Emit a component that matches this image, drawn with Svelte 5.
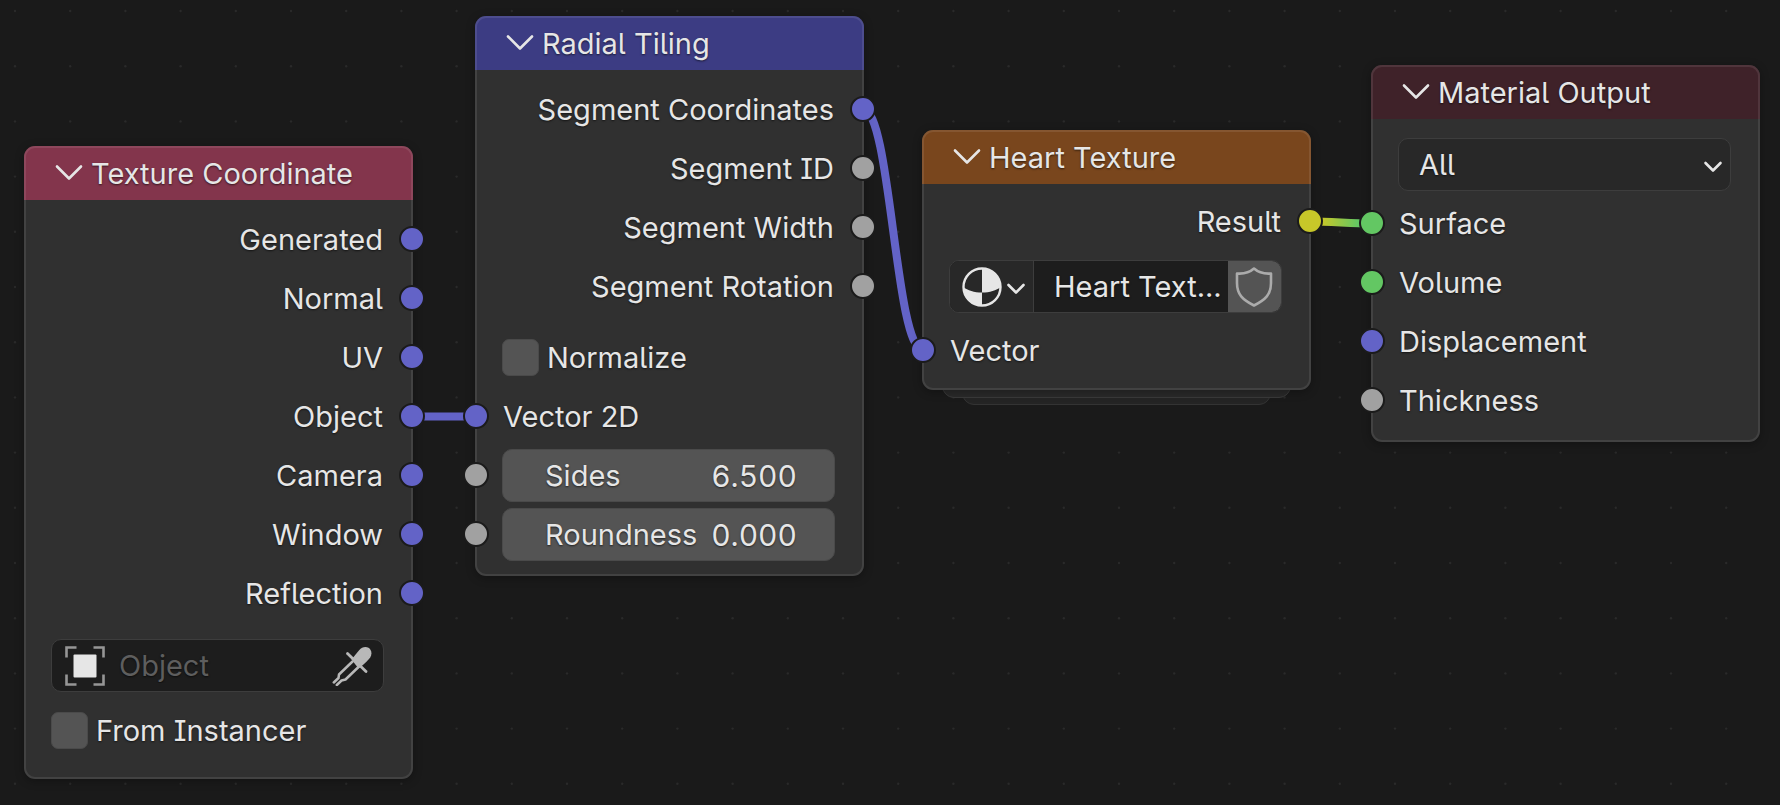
<script>
  const VECTOR = '#6363c7';
  const FLOAT = '#a1a1a1';
  const COLOR = '#c7c729';
  const SHADER = '#63c763';

  const coordinateOutputs = ['Generated', 'Normal', 'UV', 'Object', 'Camera', 'Window', 'Reflection'];
  const tilingOutputs = [
    { label: 'Segment Coordinates', color: VECTOR },
    { label: 'Segment ID', color: FLOAT },
    { label: 'Segment Width', color: FLOAT },
    { label: 'Segment Rotation', color: FLOAT }
  ];
  const materialInputs = [
    { label: 'Surface', color: SHADER },
    { label: 'Volume', color: SHADER },
    { label: 'Displacement', color: VECTOR },
    { label: 'Thickness', color: FLOAT }
  ];

  let tilingInputs = $state([
    { id: 'sides', label: 'Sides', value: '6.500' },
    { id: 'roundness', label: 'Roundness', value: '0.000' }
  ]);
  let object = $state('');
  let fromInstancer = $state(false);
  let normalize = $state(false);
  let group = $state('Heart Text...');
  let target = $state('All');

  // Background grid, in canvas units
  const pitch = 55.2;
  const dots = [];
  for (let row = 0; row < 24; row++) {
    for (let col = 0; col < 48; col++) {
      dots.push({ x: 15 + col * pitch, y: 11 + row * pitch });
    }
  }
</script>

{#snippet header(title, tone)}
  <header class="header {tone}">
    <button class="collapse" type="button" aria-label="Collapse {title}">
      <svg width="28" height="18" viewBox="0 0 28 18" aria-hidden="true">
        <path d="M2 2.5 14 14.5 26 2.5" />
      </svg>
    </button>
    <h2>{title}</h2>
  </header>
{/snippet}

{#snippet socket(side, color)}
  <i class="socket {side}" style:background-color={color}></i>
{/snippet}

<main class="canvas">
  <svg class="layer" aria-hidden="true">
    <defs>
      <linearGradient id="result-link" gradientUnits="userSpaceOnUse" x1="1322" y1="0" x2="1358" y2="0">
        <stop offset="0" stop-color={COLOR} />
        <stop offset="1" stop-color={SHADER} />
      </linearGradient>
    </defs>
    {#each dots as dot}
      <circle cx={dot.x} cy={dot.y} r="1.2" fill="#2a2a2a" />
    {/each}
    <g class="links">
      <path d="M412 416.5H476" stroke={VECTOR} />
      <path d="M863 109C891 109 895 350 923 350" stroke={VECTOR} />
      <path d="M1310 221.5C1332 221.5 1350 223.5 1372 223.5" stroke="url(#result-link)" />
    </g>
  </svg>

  <section class="node coordinate">
    {@render header('Texture Coordinate', 'input')}
    <div class="body">
      {#each coordinateOutputs as label}
        <div class="row out">{label}{@render socket('right', VECTOR)}</div>
      {/each}
      <div class="row gap-large">
        <div class="field dark">
          <svg class="object-icon" width="40" height="40" viewBox="0 0 40 40" aria-hidden="true">
            <path d="M1.5 11.5v-10h10M28.5 1.5h10v10M38.5 28.5v10h-10M11.5 38.5h-10v-10" fill="none" stroke="#969696" stroke-width="2.6" />
            <rect x="8.5" y="8.5" width="23" height="23" rx="1" fill="#e6e6e6" />
          </svg>
          <input class="object" type="text" aria-label="Object" placeholder="Object" bind:value={object} />
          <button class="icon-button" type="button" aria-label="Pick object">
            <svg width="40" height="40" viewBox="0 0 40 40" aria-hidden="true">
              <path d="M19.5 13.5 27.3 4C29.6 1.2 33.5 .2 36.5 1.8 39.8 4 40.2 8 38.2 11.5 36.5 14 31 19 26.5 22.5Z" fill="#b8b8b8" />
              <path d="M15.5 7.5 34 25.5" stroke="#b8b8b8" stroke-width="2.8" stroke-linecap="round" />
              <path d="M20.5 15.5 7 28.5 6.5 32 1.8 36.5M26.5 21 13.5 33.5 9.5 34.5 4.8 39" fill="none" stroke="#b8b8b8" stroke-width="2.5" stroke-linecap="round" stroke-linejoin="round" />
            </svg>
          </button>
        </div>
      </div>
      <div class="row gap-small">
        <label class="check"><input type="checkbox" bind:checked={fromInstancer} />From Instancer</label>
      </div>
    </div>
  </section>

  <section class="node tiling">
    {@render header('Radial Tiling', 'vector')}
    <div class="body">
      {#each tilingOutputs as output}
        <div class="row out">{output.label}{@render socket('right', output.color)}</div>
      {/each}
      <div class="row gap-large">
        <label class="check"><input type="checkbox" bind:checked={normalize} />Normalize</label>
      </div>
      <div class="row">Vector 2D{@render socket('left', VECTOR)}</div>
      {#each tilingInputs as input}
        <div class="row">
          <div class="field number">
            <label for={input.id}>{input.label}</label>
            <input id={input.id} type="text" inputmode="decimal" bind:value={input.value} />
          </div>
          {@render socket('left', FLOAT)}
        </div>
      {/each}
    </div>
  </section>

  <div class="group">
    <section class="node">
      {@render header('Heart Texture', 'texture')}
      <div class="body">
        <div class="row out">Result{@render socket('right', COLOR)}</div>
        <div class="row gap-small">
          <div class="field dark">
            <button class="browse" type="button" aria-label="Browse node groups">
              <svg width="40" height="40" viewBox="0 0 40 40" aria-hidden="true">
                <circle cx="20" cy="20" r="18.5" fill="none" stroke="#e6e6e6" stroke-width="2.4" />
                <path d="M20 1V25.5C28 25.5 34 23.5 39 20A19 19 0 0 0 20 1ZM20 39V25.5C12 25.5 6 23.5 1 20A19 19 0 0 0 20 39Z" fill="#e6e6e6" />
              </svg>
              <svg class="caret" width="20" height="14" viewBox="0 0 20 14" aria-hidden="true">
                <path d="M2.5 3 10 10.5 17.5 3" />
              </svg>
            </button>
            <input class="name" type="text" aria-label="Node group" bind:value={group} />
            <button class="fake-user" type="button" aria-label="Fake user">
              <svg width="40" height="42" viewBox="0 0 40 42" aria-hidden="true">
                <path d="M20 2.5C15.5 6.5 9 8 3 7.5V17C3 28.5 8.5 33.5 20 39.5 31.5 33.5 37 28.5 37 17V7.5C31 8 24.5 6.5 20 2.5Z" fill="none" stroke="#ababab" stroke-width="2.6" stroke-linejoin="round" />
              </svg>
            </button>
          </div>
        </div>
        <div class="row gap-small">Vector{@render socket('left', VECTOR)}</div>
      </div>
    </section>
    <div class="sheet first"></div>
    <div class="sheet second"></div>
  </div>

  <section class="node material">
    {@render header('Material Output', 'output')}
    <div class="body">
      <div class="row">
        <div class="field menu">
          <select aria-label="Target" bind:value={target}>
            <option>All</option>
            <option>EEVEE</option>
            <option>Cycles</option>
          </select>
          <svg class="caret" width="20" height="14" viewBox="0 0 20 14" aria-hidden="true">
            <path d="M2.5 3 10 10.5 17.5 3" />
          </svg>
        </div>
      </div>
      {#each materialInputs as input}
        <div class="row">{input.label}{@render socket('left', input.color)}</div>
      {/each}
    </div>
  </section>
</main>

<style>
  :global(body) {
    margin: 0;
    background: #1a1a1a;
  }

  .canvas {
    position: relative;
    min-height: 100vh;
    overflow: hidden;
    background: #1a1a1a;
    color: #e6e6e6;
    font-family: Inter, "Liberation Sans", sans-serif;
    font-size: 29px;
    line-height: 36px;
    font-feature-settings: "cv05", "cv08";
    text-shadow: 0 1px 2px rgba(0, 0, 0, 0.6);
  }

  .layer {
    position: absolute;
    inset: 0;
    width: 100%;
    height: 100%;
  }

  .links path {
    fill: none;
    stroke-width: 8;
  }

  .node {
    position: relative;
    width: 389px;
    border-radius: 11px;
    background: #303030;
    box-shadow: 0 2px 10px rgba(0, 0, 0, 0.3);
  }

  .node::after {
    content: "";
    position: absolute;
    inset: 0;
    border: 2px solid rgba(255, 255, 255, 0.09);
    border-radius: inherit;
    pointer-events: none;
  }

  .coordinate,
  .tiling,
  .group,
  .material {
    position: absolute;
  }

  .coordinate { left: 24px; top: 146px; }
  .tiling { left: 475px; top: 16px; }
  .group { left: 922px; top: 130px; }
  .material { left: 1371px; top: 65px; }

  .header {
    display: flex;
    align-items: center;
    gap: 8px;
    height: 54px;
    padding-left: 31px;
    border-radius: 11px 11px 0 0;
  }

  .header.input { background: #83354c; }
  .header.vector { background: #3c3c83; }
  .header.texture { background: #79461d; }
  .header.output { background: #3f2229; }

  h2 {
    margin: 0;
    padding-top: 2px;
    font: inherit;
    font-feature-settings: inherit;
  }

  button {
    display: flex;
    align-items: center;
    justify-content: center;
    padding: 0;
    border: 0;
    background: none;
    color: inherit;
    font: inherit;
  }

  .collapse path,
  .caret path {
    fill: none;
    stroke: #e6e6e6;
    stroke-width: 2.6;
    stroke-linecap: round;
    stroke-linejoin: round;
  }

  .caret { margin-top: 4px; }

  .body {
    padding: 10px 30px 12px 28px;
  }

  .coordinate .body { padding-bottom: 19px; }
  .group .body { padding-top: 8px; padding-bottom: 10px; }
  .material .body { padding-top: 16px; }

  .row {
    position: relative;
    display: flex;
    align-items: center;
    height: 59px;
    margin: 0 -30px 0 -28px;
    padding: 0 30px 0 28px;
  }

  .row.out { justify-content: flex-end; }
  .row.gap-large { margin-top: 12px; }
  .row.gap-small { margin-top: 6px; }
  .coordinate .row.gap-large { margin-top: 13px; }
  .group .row:last-child { margin-top: 5px; }

  .socket {
    position: absolute;
    z-index: 1;
    top: 16px;
    box-sizing: border-box;
    width: 26px;
    height: 26px;
    border: 2px solid #1b1b1b;
    border-radius: 50%;
  }

  .socket.left { left: -12px; }
  .socket.right { right: -12px; }

  .field {
    display: flex;
    align-items: center;
    flex: 1;
    min-width: 0;
    box-sizing: border-box;
    height: 53px;
    margin: 0 -1px;
    border: 1px solid #3d3d3d;
    border-radius: 10px;
    overflow: hidden;
  }

  .field.dark { background: #1d1d1d; }
  .field.menu { background: #282828; position: relative; }
  .field.number {
    padding: 0 37px 0 42px;
    background: #545454;
    border-color: #4a4a4a;
    font-feature-settings: "cv05", "cv08", "tnum";
  }

  input,
  select {
    min-width: 0;
    flex: 1;
    margin: 0;
    padding: 0;
    border: 0;
    outline: 0;
    background: none;
    color: inherit;
    font: inherit;
    font-feature-settings: inherit;
    text-shadow: inherit;
  }

  .number input {
    height: 51px;
    font-size: 30px;
    text-align: right;
  }

  .object-icon {
    flex: none;
    margin-left: 13px;
  }

  .object {
    height: 51px;
    padding-left: 14px;
  }

  .object::placeholder {
    color: #5e5e5e;
    opacity: 1;
  }

  .icon-button { margin-right: 11px; }

  .check {
    display: flex;
    align-items: center;
    gap: 8px;
    margin-left: -1px;
  }

  .check input {
    appearance: none;
    flex: none;
    box-sizing: border-box;
    width: 37px;
    height: 37px;
    border: 1px solid #4a4a4a;
    border-radius: 7px;
    background: #545454;
  }

  .check input:checked { background: #4772b3; }

  .browse {
    box-sizing: border-box;
    width: 84px;
    height: 51px;
    gap: 4px;
    padding-left: 4px;
    border-right: 1px solid #3d3d3d;
    background: #282828;
  }

  .name {
    height: 51px;
    padding-left: 20px;
  }

  .fake-user {
    box-sizing: border-box;
    width: 53px;
    height: 51px;
    padding-right: 2px;
    background: #545454;
  }

  select {
    appearance: none;
    height: 51px;
    padding-left: 20px;
  }

  option { background: #282828; }

  .menu .caret {
    position: absolute;
    right: 7px;
    pointer-events: none;
  }

  .group .node { z-index: 2; }

  .sheet {
    position: relative;
    box-sizing: border-box;
    height: 20px;
    border: 1px solid #3a3a3a;
    border-radius: 0 0 12px 12px;
    background: #292929;
  }

  .sheet.first {
    z-index: 1;
    margin: -12px 20px 0;
  }

  .sheet.second {
    margin: -13px 40px 0;
    background: #242424;
    border-color: #333333;
  }
</style>
